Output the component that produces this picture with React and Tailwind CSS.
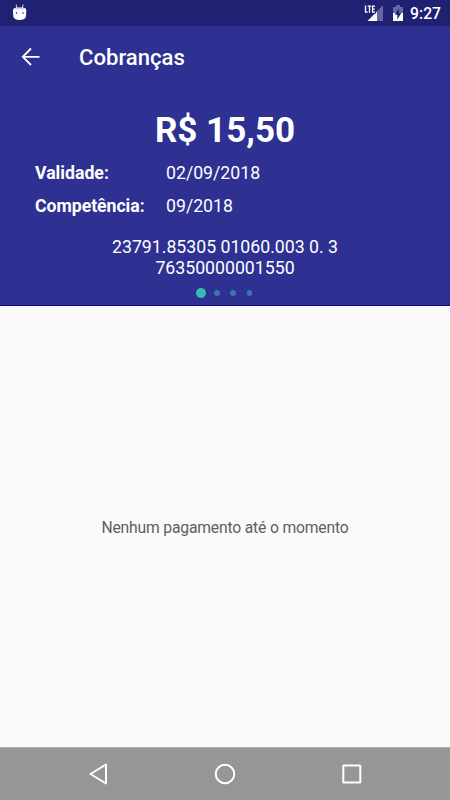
const slides = [0, 1, 2, 3];

function StatusBar() {
  return (
    <div className="h-[26px] shrink-0 bg-[#212173] flex items-center justify-between pl-3 pr-[9px]">
      <svg width="16" height="18" viewBox="0 0 16 18" fill="white">
        <path d="M4.200 0.500L4.800 4M11 0.500L10.400 4" stroke="white" strokeWidth="0.8" />
        <path d="M1 6Q1.500 3.700 5 3.400H10.500Q14 3.700 14.300 6L14 12Q13.500 16 7.600 16T1.200 12Z" />
        <path d="M3 5.200Q7.500 3.800 12.200 5.200" stroke="#a9a9cf" strokeWidth="0.8" fill="none" />
        <circle cx="4.500" cy="9" r="0.800" fill="#212173" />
        <circle cx="11" cy="9" r="0.800" fill="#212173" />
      </svg>
      <div className="flex items-center text-white">
        <svg width="20" height="20" viewBox="0 0 20 20" fill="none">
          <path d="M20 2V18H4.500Z" fill="#6565a0" />
          <path d="M14 8.500V18H4.500Z" fill="white" />
          <path d="M0 1H13V10.500H0Z" fill="#212173" />
          <path
            d="M2.500 2.500V9.200H4.700M4.700 3.100H8.300M6.500 3.100V9.800M12 3.100H9.600V9.200H12M9.600 6.100H11.700"
            stroke="white"
            strokeWidth="1.300"
          />
        </svg>
        <svg className="ml-[9px]" width="12" height="20" viewBox="0 0 12 20">
          <path d="M1 4H4V2H8V4H11V10H1Z" fill="#6565a0" />
          <path d="M1 10H11V18H1Z" fill="white" />
          <path d="M7 5.500L2.700 11.800H5.300V16.500L9.300 10H7Z" fill="#212173" />
        </svg>
        <span className="ml-[6px] mt-[2px] text-[15.700px] leading-none font-medium">9:27</span>
      </div>
    </div>
  );
}

function Header() {
  return (
    <header className="h-[62px] flex items-center pl-[21px]">
      <svg width="20" height="20" viewBox="0 0 20 20" fill="none" stroke="white" strokeWidth="1.8">
        <path d="M10 1.500L1.800 9.800L10 18M1.800 9.800H18.500" />
      </svg>
      <h1 className="ml-[38px] mt-[2px] text-[22.100px] font-medium">Cobranças</h1>
    </header>
  );
}

function Charge() {
  return (
    <section className="flex flex-col items-center">
      <p className="mt-[23px] text-[35px] leading-10 font-bold">R$ 15,50</p>
      <dl className="self-start ml-[35px] mt-[6px] grid grid-cols-[131px_auto] text-[17.700px] leading-[32.500px]">
        <dt className="font-bold">Validade:</dt>
        <dd>02/09/2018</dd>
        <dt className="font-bold tracking-[-0.050px]">Competência:</dt>
        <dd>09/2018</dd>
      </dl>
      <p className="mt-[15px] w-[250px] text-center text-[17.700px] leading-[21px]">
        23791.85305 01060.003 0. 3 76350000001550
      </p>
      <div className="mt-[9px] flex items-center gap-[6.200px]">
        {slides.map((slide) => (
          <span key={slide} className="size-[10px] flex items-center justify-center">
            <span
              className={
                slide === 0
                  ? "size-[10px] rounded-full bg-[#36bcb5]"
                  : "size-[5.500px] rounded-full bg-[#327aa8]"
              }
            />
          </span>
        ))}
      </div>
    </section>
  );
}

function NavigationBar() {
  return (
    <nav className="h-[53px] shrink-0 border-t border-[#b0b0b0] bg-[#969696] flex items-center justify-between px-[87px]">
      <svg width="22" height="22" viewBox="0 0 22 22" fill="none" stroke="white" strokeWidth="2" strokeLinejoin="round">
        <path d="M19 1.500V20.500L3.500 11Z" />
      </svg>
      <svg width="22" height="22" viewBox="0 0 22 22" fill="none" stroke="white" strokeWidth="2">
        <circle cx="11" cy="11" r="9.300" />
      </svg>
      <svg width="22" height="22" viewBox="0 0 22 22" fill="none" stroke="white" strokeWidth="2">
        <rect x="2.300" y="2.500" width="17" height="17" rx="0.500" />
      </svg>
    </nav>
  );
}

function App() {
  return (
    <div className="h-screen flex flex-col bg-[#fafafa] font-['Roboto',sans-serif]">
      <StatusBar />
      <div className="h-[280px] shrink-0 border-b border-[#0b0b7d] bg-[#2e3092] text-white">
        <Header />
        <Charge />
      </div>
      <main className="flex-1 flex items-center justify-center pt-[2px] text-[15.700px] tracking-[-0.180px] text-[#606060]">
        Nenhum pagamento até o momento
      </main>
      <NavigationBar />
    </div>
  );
}

export default App;
